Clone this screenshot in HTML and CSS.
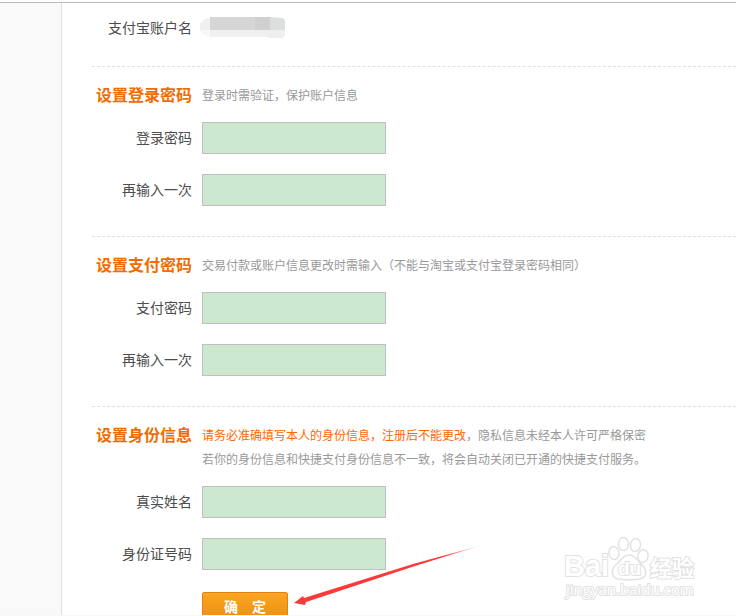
FILE: index.html
```html
<!DOCTYPE html>
<html lang="zh-CN">
<head>
  <meta charset="UTF-8">
  <title>设置身份信息</title>
  <link rel="stylesheet" href="styles.css">
</head>
<body>
<div class="page">
  <div class="side"></div>
  <form class="main">
    <div class="row account">
      <span class="label">支付宝账户名</span>
      <span class="masked">
        <svg width="88" height="24" viewBox="0 0 88 24" aria-hidden="true">
          <path d="M12 2L6 3L1 8V14H12Z" fill="#f1f0ef"/>
          <path d="M1 14H12V21L5 19Z" fill="#f7f7f6"/>
          <rect x="11" y="1" width="60" height="13" fill="#d6d6d6"/>
          <rect x="56" y="1" width="15" height="13" fill="#d0d0d0"/>
          <path d="M71 1L84 2L86 4V14H71Z" fill="#dcdfdf"/>
          <rect x="11" y="14" width="60" height="7" fill="#f0f0f0"/>
          <path d="M69 14H86V20L83 22H69Z" fill="#efefef"/>
        </svg>
      </span>
    </div>

    <section class="group">
      <div class="row head">
        <h2>设置登录密码</h2>
        <p class="hint">登录时需验证，保护账户信息</p>
      </div>
      <div class="fields">
        <div class="row">
          <label class="label" for="login-pwd">登录密码</label>
          <input class="text" type="password" id="login-pwd">
        </div>
        <div class="row">
          <label class="label" for="login-pwd2">再输入一次</label>
          <input class="text" type="password" id="login-pwd2">
        </div>
      </div>
    </section>

    <section class="group">
      <div class="row head">
        <h2>设置支付密码</h2>
        <p class="hint">交易付款或账户信息更改时需输入（不能与淘宝或支付宝登录密码相同）</p>
      </div>
      <div class="fields">
        <div class="row">
          <label class="label" for="pay-pwd">支付密码</label>
          <input class="text" type="password" id="pay-pwd">
        </div>
        <div class="row">
          <label class="label" for="pay-pwd2">再输入一次</label>
          <input class="text" type="password" id="pay-pwd2">
        </div>
      </div>
    </section>

    <section class="group">
      <div class="row head">
        <h2>设置身份信息</h2>
        <p class="hint"><span class="warn">请务必准确填写本人的身份信息，注册后不能更改</span>，隐私信息未经本人许可严格保密<br>若你的身份信息和快捷支付身份信息不一致，将会自动关闭已开通的快捷支付服务。</p>
      </div>
      <div class="fields">
        <div class="row">
          <label class="label" for="real-name">真实姓名</label>
          <input class="text" type="text" id="real-name">
        </div>
        <div class="row">
          <label class="label" for="id-number">身份证号码</label>
          <input class="text" type="text" id="id-number">
        </div>
      </div>
      <div class="row actions">
        <span class="label"></span>
        <button class="submit" type="submit">确&#12288;定</button>
      </div>
    </section>
  </form>

  <!-- arrow pointing at the submit button -->
  <svg class="arrow" width="190" height="64" viewBox="0 0 190 64" aria-hidden="true">
    <defs>
      <linearGradient id="fade" x1="0" x2="1" y1="0" y2="0">
        <stop offset="0.8" stop-color="#fc3a3a"/>
        <stop offset="1" stop-color="#fc3a3a" stop-opacity="0.3"/>
      </linearGradient>
    </defs>
    <path d="M1 61L10 54L11 56L120 22L186 4L122 24L13 60L12 63Z" fill="url(#fade)"/>
  </svg>

  <svg class="watermark" width="140" height="72" viewBox="0 0 140 72" aria-hidden="true">
    <g fill="#fff" stroke="#e2e2e2" stroke-width="1.5">
      <ellipse cx="54" cy="24" rx="5" ry="6.5" transform="rotate(-8 54 24)"/>
      <ellipse cx="63.5" cy="15" rx="5" ry="6.5"/>
      <ellipse cx="75.5" cy="16" rx="5" ry="6.5" transform="rotate(8 75 16)"/>
      <ellipse cx="83" cy="27" rx="5" ry="6.5" transform="rotate(12 83 27)"/>
      <path d="M69 26C63 26 61 31 57 35C51 39 50 48 58 50C63 51 75 51 80 50C88 48 87 40 81 35C77 31 75 26 69 26Z"/>
    </g>
    <g class="mark">
      <text class="mark-bai" x="4" y="47">Bai</text>
      <text class="mark-du" x="58" y="46">du</text>
      <text class="mark-cn" x="90" y="47">经验</text>
      <text class="mark-url" x="6" y="66">jingyan.baidu.com</text>
    </g>
  </svg>
</div>
</body>
</html>
```

FILE: styles.css
```css
* { box-sizing: border-box; }
body { margin: 0; background: #fff; color: #4d4d4d; font: 14px/24px "Noto Sans CJK SC", sans-serif; }
h2, p { margin: 0; }

.page { position: relative; display: flex; height: 100vh; overflow: hidden; border-bottom: 1px solid #f7f7f7; }
.page::before { content: ""; position: absolute; top: 0; left: 0; right: 0; height: 2px; background: #fdfdfd; border-bottom: 1px solid #bbb; }
.side { flex: 0 0 62px; background: #f9f9f9; border-right: 1px solid #e0e0e0; }
.main { flex: 1; min-width: 0; padding-left: 30px; }

.row { display: flex; align-items: center; gap: 10px; }
.label, .head h2 { flex: 0 0 100px; text-align: right; }
.label { padding-bottom: 2px; }
.account { padding: 15px 0 25px; }
.masked { display: flex; margin-left: -3px; }

.group { border-top: 1px dashed #e0e0e0; padding: 16px 0 30px; }
.head { align-items: flex-start; margin-bottom: 15px; }
.head h2 { font-size: 16px; line-height: 22px; font-weight: bold; color: #f06c00; }
.hint { font-size: 12px; line-height: 24px; color: #999; white-space: nowrap; }
.warn { color: #f60; }

.fields { display: flex; flex-direction: column; gap: 20px; }
.text { width: 184px; height: 32px; padding: 4px 8px; border: 1px solid #bfbfbf; background: #cce8cf; font: inherit; }
.actions { margin-top: 22px; }
.submit { width: 86px; height: 32px; padding: 0 0 4px; border: 1px solid #e48312; border-radius: 2px; background: linear-gradient(#f8a622, #ef8b0c); color: #fff; font: bold 14px/26px "Noto Sans CJK SC", sans-serif; }

.arrow { position: absolute; left: 293px; top: 542px; }
.watermark { position: absolute; right: 36px; bottom: 14px; }
.mark { fill: #fff; stroke: #e2e2e2; stroke-width: 2px; paint-order: stroke; font-family: "Liberation Sans", "Noto Sans CJK SC", sans-serif; }
.mark-bai { font-size: 29px; font-weight: bold; }
.mark-du { font-size: 19px; font-weight: bold; }
.mark-cn { font-size: 22px; font-weight: bold; }
.mark-url { font-family: "Open Sans", sans-serif; font-size: 15px; }
```
